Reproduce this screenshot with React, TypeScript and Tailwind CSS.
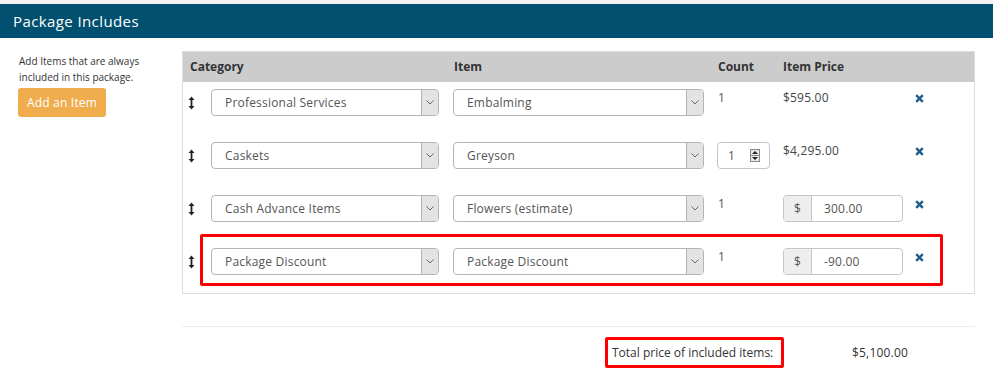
import React from "react";

const F = { fontFamily: '"Open Sans", "Liberation Sans", sans-serif' };

function Drag() {
  return (
    <svg width="7" height="14" viewBox="0 0 7 14" className="block">
      <path d="M3.5 0.5 L6.5 4 L4.4 4 L4.4 10 L6.5 10 L3.5 13.5 L0.5 10 L2.6 10 L2.6 4 L0.5 4 Z" fill="#222" />
    </svg>
  );
}

function Select({ value, w }: { value: string; w: string }) {
  return (
    <div className={`${w} h-[27px] flex border border-[#b5b5b5] rounded-[4px] overflow-hidden bg-white`}>
      <div className="flex-1 flex items-center pl-[13px] text-[12px] text-[#555] tracking-[0.2px]">{value}</div>
      <div className="w-[17px] bg-[#e3e3e3] border-l border-[#b5b5b5] flex items-center justify-center">
        <svg width="8" height="5" viewBox="0 0 8 5">
          <path d="M0.5 0.5 L4 4 L7.5 0.5" stroke="#666" strokeWidth="1" fill="none" />
        </svg>
      </div>
    </div>
  );
}

function X() {
  return (
    <svg width="9" height="9" viewBox="0 0 9 9" className="block">
      <path d="M1.2 1.2 L7.8 7.8 M7.8 1.2 L1.2 7.8" stroke="#1f5d8a" strokeWidth="2.4" strokeLinecap="butt" />
    </svg>
  );
}

function PriceInput({ v }: { v: string }) {
  return (
    <div className="w-[120px] h-[27px] flex border border-[#c5c5c5] rounded-[4px] overflow-hidden">
      <div className="w-[28px] bg-[#eeeeee] border-r border-[#c5c5c5] flex items-center justify-center text-[12px] text-[#555]">$</div>
      <div className="flex-1 flex items-center pl-[12px] text-[12px] text-[#555] tracking-[0.2px]">{v}</div>
    </div>
  );
}

type Row = { cat: string; item: string; count: "text" | "input"; price: string; priceInput?: boolean; hl?: boolean };

const rows: Row[] = [
  { cat: "Professional Services", item: "Embalming", count: "text", price: "$595.00" },
  { cat: "Caskets", item: "Greyson", count: "input", price: "$4,295.00" },
  { cat: "Cash Advance Items", item: "Flowers (estimate)", count: "text", price: "300.00", priceInput: true },
  { cat: "Package Discount", item: "Package Discount", count: "text", price: "-90.00", priceInput: true, hl: true },
];

export default function App() {
  return (
    <div className="w-[993px] h-[375px] bg-white overflow-hidden" style={F}>
      <div className="h-[4px] bg-[#f2f2f2]" />
      <div className="h-[34px] bg-[#02506f] flex items-center pl-[13px] text-white text-[15px] tracking-[0.4px]">Package Includes</div>
      <div className="flex">
        <div className="w-[182px] pl-[19px] pt-[15px]">
          <div className="text-[10px] leading-[16px] text-[#333]">
            Add Items that are always
            <br />
            included in this package.
          </div>
          <div className="mt-[3px] ml-[-1px] w-[88px] h-[29px] bg-[#f0ad4e] rounded-[3px] flex items-center justify-center text-white text-[12px] tracking-[0.2px]">
            Add an Item
          </div>
        </div>
        <div className="w-[793px]">
          <div className="mt-[13px] border border-[#dddddd] h-[243px]">
            <div className="h-[30px] bg-[#cccccc] flex items-center text-[12px] font-bold text-[#333]">
              <div className="w-[271px] pl-[7px]">Category</div>
              <div className="w-[264px]">Item</div>
              <div className="w-[65px]">Count</div>
              <div>Item Price</div>
            </div>
            {rows.map((r, i) => (
              <div key={i} className="relative h-[53px] flex items-start pt-[7px]">
                <div className="w-[28px] pl-[5px] pt-[7px]">
                  <Drag />
                </div>
                <Select value={r.cat} w="w-[228px]" />
                <div className="w-[14px]" />
                <Select value={r.item} w="w-[251px]" />
                <div className="w-[13px]" />
                <div className="w-[66px]">
                  {r.count === "text" ? (
                    <div className="text-[12px] text-[#555] pl-[1px] pt-[1px] leading-[16px]">1</div>
                  ) : (
                    <div className="w-[53px] h-[27px] border border-[#c5c5c5] rounded-[4px] flex items-center pl-[10px] justify-between pr-[9px]">
                      <span className="text-[12px] text-[#555]">1</span>
                      <div className="w-[10px] h-[13px] border border-[#888] flex flex-col bg-white">
                        <div className="flex-1 flex items-center justify-center border-b border-[#888] bg-[#e8e8e8]">
                          <svg width="6" height="3" viewBox="0 0 6 3"><path d="M3 0 L6 3 L0 3 Z" fill="#222" /></svg>
                        </div>
                        <div className="flex-1 flex items-center justify-center bg-[#e8e8e8]">
                          <svg width="6" height="3" viewBox="0 0 6 3"><path d="M0 0 L6 0 L3 3 Z" fill="#222" /></svg>
                        </div>
                      </div>
                    </div>
                  )}
                </div>
                <div className="w-[132px]">
                  {r.priceInput ? (
                    <PriceInput v={r.price} />
                  ) : (
                    <div className="text-[12px] text-[#444] leading-[16px] pt-[1px] tracking-[0.2px]">{r.price}</div>
                  )}
                </div>
                <div className="pt-[5px]">
                  <X />
                </div>
                {r.hl && (
                  <div className="absolute left-[17px] top-[-7px] w-[743px] h-[52px] border-[3px] border-[#ff0000] rounded-[2px] pointer-events-none" />
                )}
              </div>
            ))}
          </div>
          <div className="mt-[32px] border-t border-[#eeeeee] h-[1px]" />
          <div className="flex items-center pt-[10px]">
            <div className="ml-[423px] w-[179px] h-[31px] border-[3px] border-[#ff0000] rounded-[2px] flex items-center pl-[4px] text-[12px] text-[#333]">
              Total price of included items:
            </div>
            <div className="ml-[68px] text-[12px] text-[#333] tracking-[0.2px]">$5,100.00</div>
          </div>
        </div>
      </div>
    </div>
  );
}
